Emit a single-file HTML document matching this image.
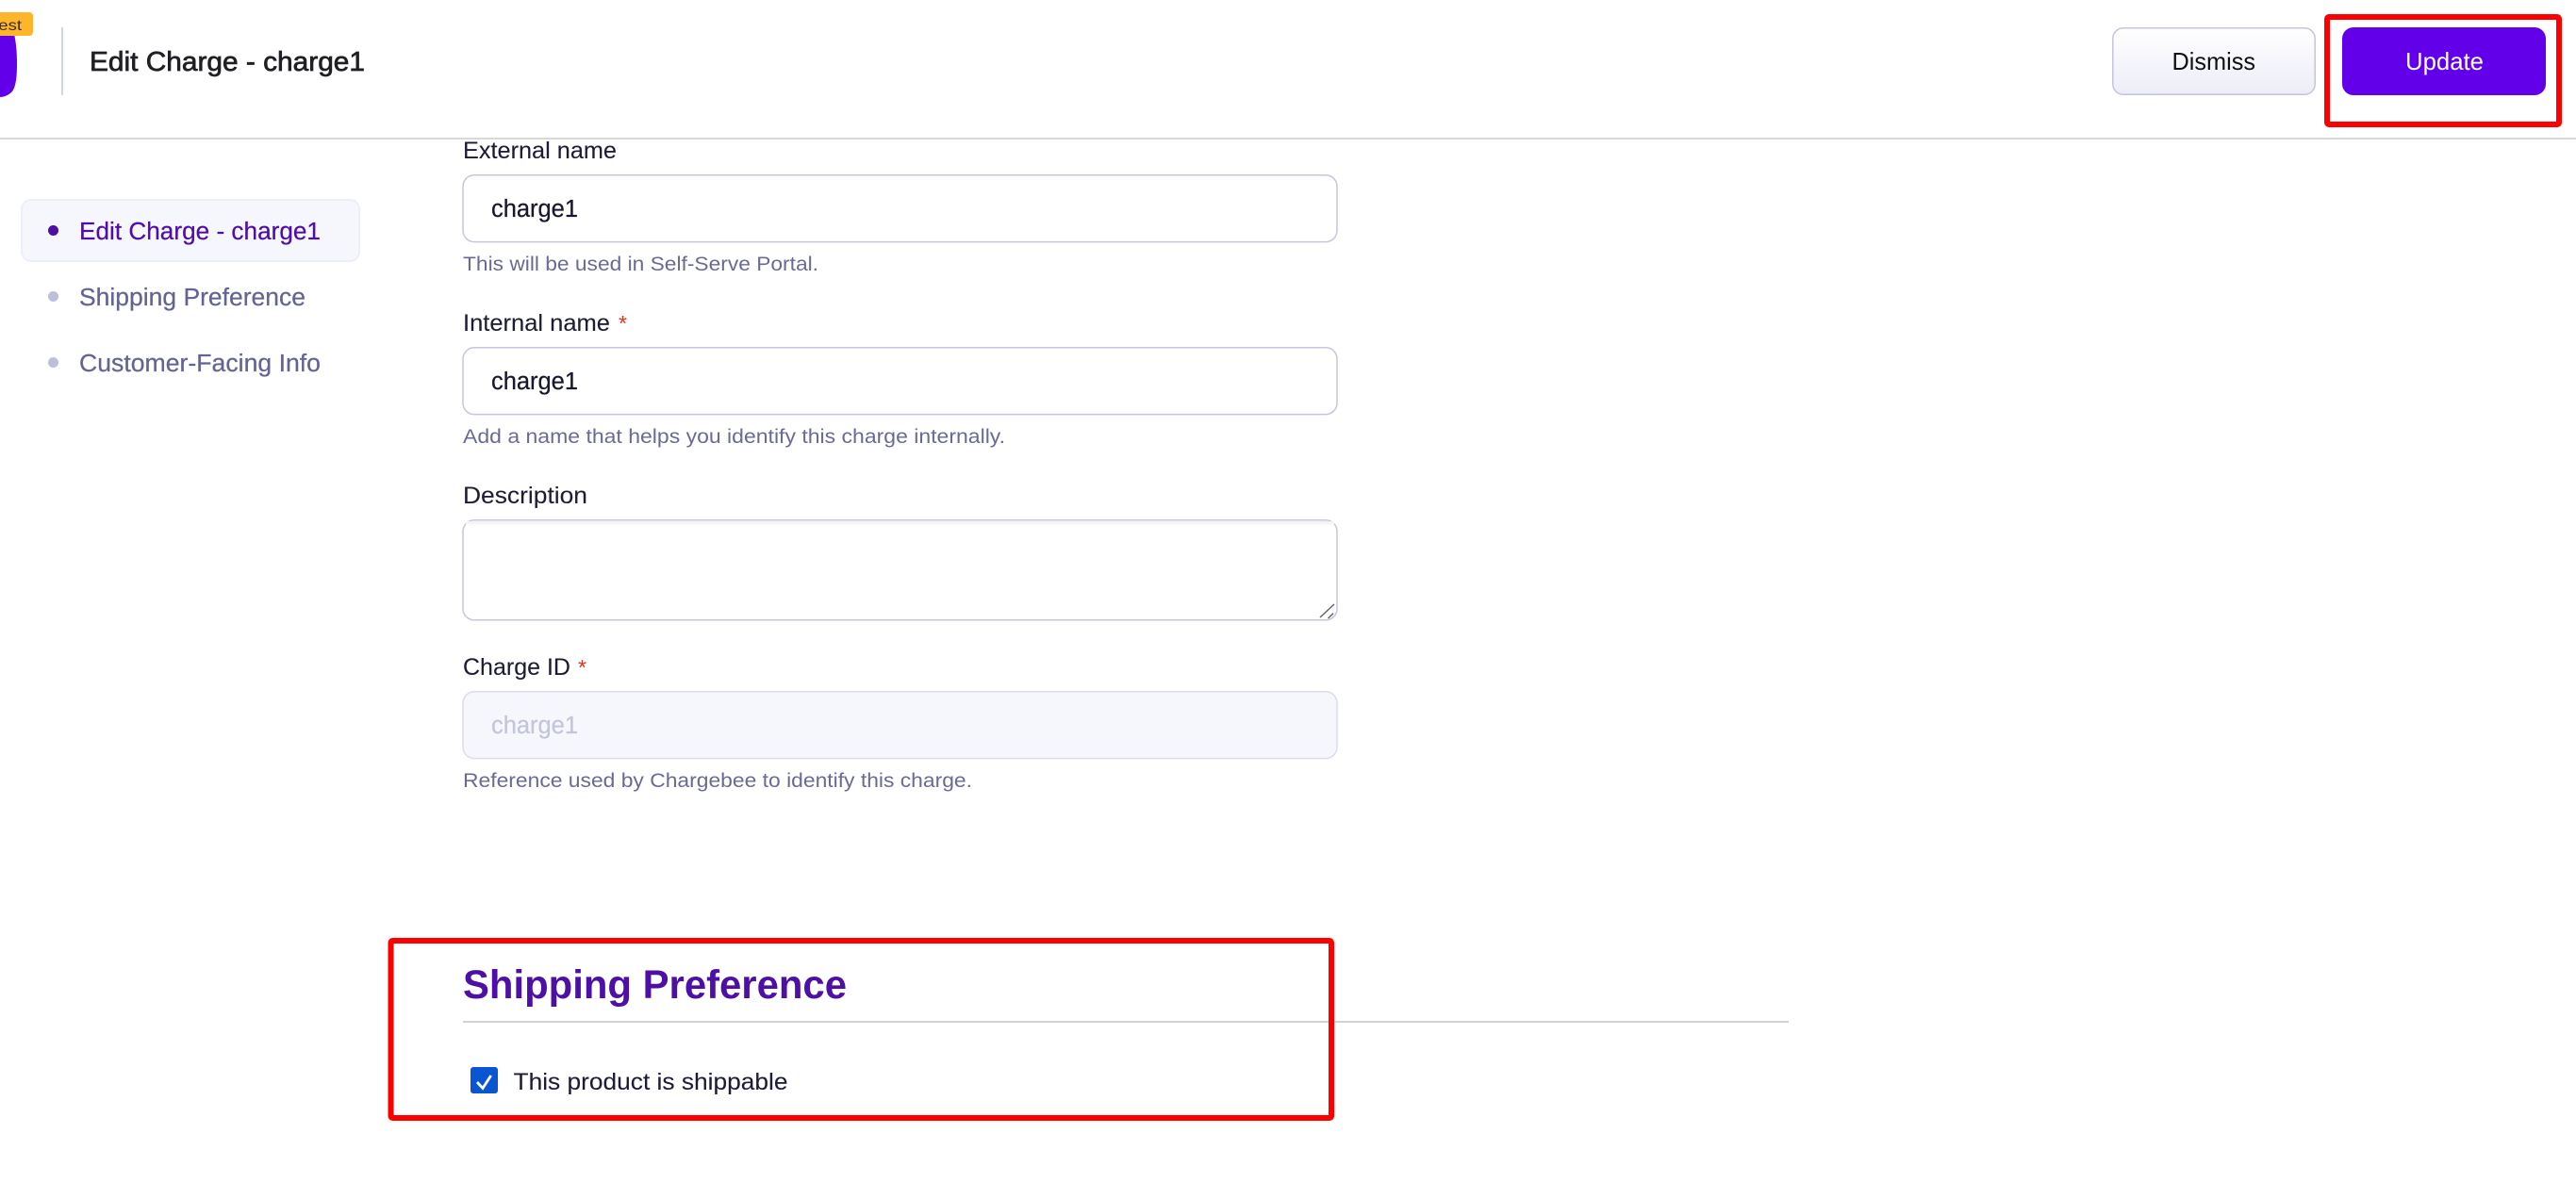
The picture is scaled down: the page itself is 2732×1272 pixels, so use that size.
<!DOCTYPE html>
<html lang="en">
<head>
<meta charset="utf-8">
<title>Edit Charge - charge1</title>
<style>
html,body{margin:0;padding:0;background:#fff;width:2732px;height:1272px;overflow:hidden}
svg{display:block;position:absolute;left:0;top:0}
text{font-family:"Liberation Sans",Arial,sans-serif;white-space:pre}
.lbl{font-size:25px;fill:#1c1c36;stroke:#1c1c36;stroke-width:.1}
.help{font-size:21.5px;fill:#696a96}
.val{font-size:25.5px;fill:#17172e;stroke:#17172e;stroke-width:.25}
.nav{font-size:25.5px;fill:#636494;stroke:#636494;stroke-width:.25}
.box{fill:#fff;stroke:#c6c6df;stroke-width:1.5}
.star{font-size:23px;fill:#e8301c}
</style>
</head>
<body>
<svg width="2732" height="1272" viewBox="0 0 2732 1272" xmlns="http://www.w3.org/2000/svg">
<defs>
<linearGradient id="dg" x1="0" y1="0" x2="0" y2="1">
<stop offset="0" stop-color="#ffffff"/><stop offset="1" stop-color="#ecedf7"/>
</linearGradient>
<linearGradient id="ta" x1="0" y1="0" x2="0" y2="1">
<stop offset="0" stop-color="#f0f0f5"/><stop offset="1" stop-color="#ffffff"/>
</linearGradient>
</defs>

<!-- header -->
<path d="M0 36H15C17 45 18 55 18 68C18 85 16 94 12 98C9 101 4 103 0 103Z" fill="#6200ea"/>
<rect x="-20" y="13" width="55" height="25" rx="4" fill="#feb52c"/>
<text x="-11" y="32" font-size="16" fill="#3a2f14" textLength="34" lengthAdjust="spacingAndGlyphs">Test</text>
<rect x="65" y="29" width="2" height="72" fill="#d0d5e8"/>
<text x="95" y="75" font-size="28.5" fill="#1f1f24" stroke="#1f1f24" stroke-width=".7" textLength="292" lengthAdjust="spacingAndGlyphs">Edit Charge - charge1</text>

<rect x="2240.800" y="29.800" width="214.400" height="70.400" rx="11" fill="url(#dg)" stroke="#c5c3dd" stroke-width="1.500"/>
<text x="2303.500" y="74" font-size="26" fill="#111" textLength="88.500" lengthAdjust="spacingAndGlyphs">Dismiss</text>
<rect x="2484" y="29" width="216" height="72" rx="12" fill="#6200ea"/>
<text x="2551" y="74" font-size="26" fill="#fff" textLength="83" lengthAdjust="spacingAndGlyphs">Update</text>
<rect x="2468" y="18" width="246" height="114" rx="2" fill="none" stroke="#ff0000" stroke-width="6"/>

<rect x="0" y="146" width="2732" height="2" fill="#d9d9d9"/>

<!-- sidebar -->
<rect x="23" y="212" width="358" height="65" rx="10" fill="#f6f7fc" stroke="#eceef9" stroke-width="2"/>
<circle cx="56.500" cy="244.500" r="5.500" fill="#4f0ea6"/>
<text x="84" y="254" class="nav" style="fill:#4f0ea6;stroke:#4f0ea6" textLength="256" lengthAdjust="spacingAndGlyphs">Edit Charge - charge1</text>
<circle cx="56.500" cy="314.500" r="5.500" fill="#bdbedb"/>
<text x="84" y="324" class="nav" textLength="240" lengthAdjust="spacingAndGlyphs">Shipping Preference</text>
<circle cx="56.500" cy="384.500" r="5.500" fill="#bdbedb"/>
<text x="84" y="394" class="nav" textLength="256" lengthAdjust="spacingAndGlyphs">Customer-Facing Info</text>

<!-- form -->
<text x="491" y="168" class="lbl" textLength="163" lengthAdjust="spacingAndGlyphs">External name</text>
<rect x="491" y="185.800" width="927" height="70.800" rx="12" class="box"/>
<text x="521" y="230" class="val" textLength="92" lengthAdjust="spacingAndGlyphs">charge1</text>
<text x="491" y="287" class="help" textLength="377" lengthAdjust="spacingAndGlyphs">This will be used in Self-Serve Portal.</text>

<text x="491" y="351" class="lbl" textLength="156" lengthAdjust="spacingAndGlyphs">Internal name</text>
<text x="656" y="351" class="star">*</text>
<rect x="491" y="368.800" width="927" height="70.800" rx="12" class="box"/>
<text x="521" y="413" class="val" textLength="92" lengthAdjust="spacingAndGlyphs">charge1</text>
<text x="491" y="470" class="help" textLength="575" lengthAdjust="spacingAndGlyphs">Add a name that helps you identify this charge internally.</text>

<text x="491" y="534" class="lbl" textLength="132" lengthAdjust="spacingAndGlyphs">Description</text>
<rect x="491" y="551.800" width="927" height="106" rx="12" class="box"/>
<rect x="494" y="553" width="921" height="5" rx="3" fill="url(#ta)"/>
<path d="M1400 655L1415 641M1408.500 656L1414 650.700" stroke="#666" stroke-width="1.500" fill="none"/>

<text x="491" y="716" class="lbl" textLength="114" lengthAdjust="spacingAndGlyphs">Charge ID</text>
<text x="613" y="716" class="star">*</text>
<rect x="491" y="733.800" width="927" height="70.800" rx="12" fill="#f6f7fc" stroke="#dcdcec" stroke-width="1.500"/>
<text x="521" y="778" class="val" style="fill:#c4c4da;stroke:#c4c4da" textLength="92" lengthAdjust="spacingAndGlyphs">charge1</text>
<text x="491" y="835" class="help" textLength="540" lengthAdjust="spacingAndGlyphs">Reference used by Chargebee to identify this charge.</text>

<!-- shipping section -->
<text x="491" y="1059" font-size="43" font-weight="700" fill="#4d0fa5" textLength="407" lengthAdjust="spacingAndGlyphs">Shipping Preference</text>
<rect x="491" y="1083" width="1406" height="2" fill="#d2d2d2"/>
<rect x="499" y="1132" width="29" height="28" rx="3" fill="#0a55d1"/>
<path d="M506 1148L512 1154.500L520.700 1141" fill="none" stroke="#fff" stroke-width="2.800"/>
<text x="544.500" y="1156" class="lbl" textLength="291" lengthAdjust="spacingAndGlyphs">This product is shippable</text>
<rect x="414.500" y="998" width="997.500" height="188" rx="2" fill="none" stroke="#ff0000" stroke-width="6"/>
</svg>
</body>
</html>
